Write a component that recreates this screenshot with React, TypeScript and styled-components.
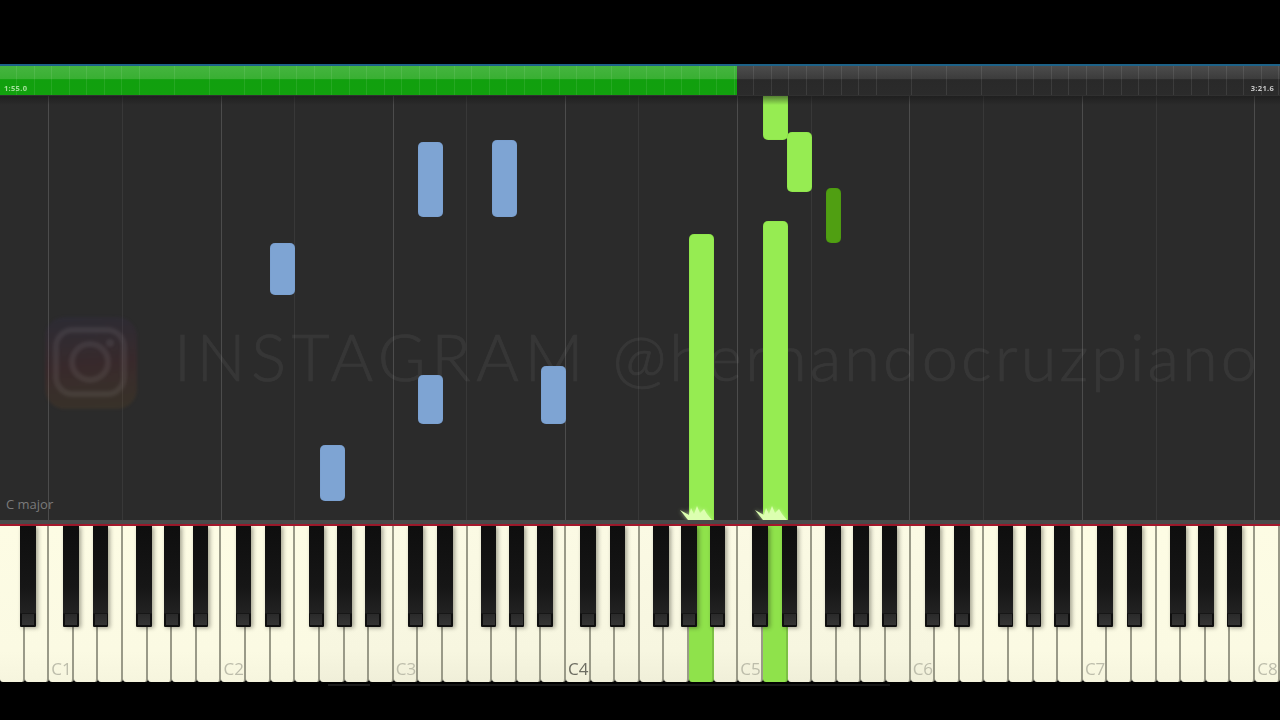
import React from "react";
import styled, { createGlobalStyle } from "styled-components";

const Global = createGlobalStyle`
  html, body { margin: 0; padding: 0; background: #000; overflow: hidden; }
  #root { width: 1280px; height: 720px; }
`;

const Page = styled.div`
  width: 1280px;
  height: 720px;
  display: flex;
  flex-direction: column;
  background: #000;
  font-family: "Open Sans", "Liberation Sans", sans-serif;
  overflow: hidden;
`;

const Letterbox = styled.div`
  height: 64px;
  flex: none;
  background: #000;
`;

const Timeline = styled.div`
  height: 32px;
  flex: none;
  display: flex;
  position: relative;
  border-top: 2px solid #1d6288;
  box-sizing: border-box;
  border-bottom: 1px solid #303030;
`;

const ticks = `repeating-linear-gradient(90deg, transparent 0, transparent 16.5px, rgba(255,255,255,0.085) 16.5px, rgba(255,255,255,0.085) 17.5px)`;

const Played = styled.div`
  width: 737px;
  flex: none;
  background: ${ticks}, linear-gradient(180deg, #45b53f 0%, #39af33 44%, #11a00e 47%, #12a00e 100%);
`;

const Remaining = styled.div`
  flex: 1;
  background: ${ticks}, linear-gradient(180deg, #4c4c4c 0%, #3c3c3c 44%, #292929 47%, #2b2b2b 100%);
`;

const TimeLabel = styled.span<{ $side: "left" | "right"; $color: string }>`
  position: absolute;
  bottom: 2px;
  ${(p) => (p.$side === "left" ? "left: 4px;" : "right: 6px;")}
  font-size: 7.5px;
  line-height: 9px;
  font-weight: 700;
  letter-spacing: 0.3px;
  color: ${(p) => p.$color};
  filter: blur(0.3px);
`;

const Roll = styled.div`
  height: 424px;
  flex: none;
  position: relative;
  background: #2b2b2b;
  overflow: hidden;
`;

const GridLine = styled.div<{ $major: boolean }>`
  position: absolute;
  top: 0;
  bottom: 0;
  width: 1px;
  background: ${(p) => (p.$major ? "#4c4c4c" : "#383838")};
`;

const Watermark = styled.div`
  position: absolute;
  left: 44px;
  top: 220px;
  display: flex;
  align-items: center;
`;

const LogoSvg = styled.svg`
  width: 94px;
  height: 94px;
  flex: none;
  filter: blur(1.5px);
`;

const WatermarkText = styled.span`
  margin-left: 36px;
  margin-top: -14px;
  font-family: Lato, "Open Sans", sans-serif;
  font-size: 65px;
  line-height: 80px;
  font-weight: 300;
  color: #fff;
  -webkit-text-stroke: 0.7px #fff;
  opacity: 0.05;
  white-space: nowrap;
  filter: blur(0.5px);
`;

const Brand = styled.span`
  letter-spacing: 5.65px;
`;

const Handle = styled.span`
  letter-spacing: 3px;
`;

const KeyName = styled.span`
  position: absolute;
  left: 6px;
  bottom: 8px;
  font-size: 13px;
  line-height: 16px;
  color: #7a7a7a;
  font-family: "Open Sans", sans-serif;
`;

const Note = styled.div<{ $tone: "blue" | "green" | "dark" }>`
  position: absolute;
  box-sizing: border-box;
  border-radius: 5px;
  background: ${(p) =>
    p.$tone === "blue" ? "#7ea4d3" : p.$tone === "green" ? "#96ec52" : "#509f12"};
  box-shadow: inset 0 0 1px
    ${(p) => (p.$tone === "blue" ? "#6a8fc0" : p.$tone === "green" ? "#6cbf30" : "#3c8008")};
`;

const TopShade = styled.div`
  position: absolute;
  left: 0;
  right: 0;
  top: 0;
  height: 9px;
  background: linear-gradient(180deg, rgba(20, 20, 20, 0.5), rgba(20, 20, 20, 0));
`;

const Spark = styled.svg`
  position: absolute;
  bottom: 0;
  width: 40px;
  height: 16px;
  filter: drop-shadow(0 0 2px rgba(220, 255, 180, 0.7));
`;

const Keyboard = styled.div`
  height: 162px;
  flex: none;
  position: relative;
  background: #000;
  border-top: 4px solid #4a4a4a;
  box-sizing: border-box;
`;

const RedLine = styled.div`
  height: 2px;
  background: #a5182c;
`;

const WhiteRow = styled.div`
  display: flex;
  height: 156px;
`;

const WhiteKey = styled.div<{ $pressed: boolean; $muted: boolean }>`
  flex: 1 1 0;
  position: relative;
  box-sizing: border-box;
  border-right: 2px solid ${(p) => (p.$pressed ? "#7cc044" : "#9a9a88")};
  border-bottom-left-radius: 3px;
  border-bottom-right-radius: 3px;
  background: ${(p) =>
    p.$pressed
      ? "#8fe24b"
      : p.$muted
      ? "linear-gradient(180deg, #fbfae4 0%, #f7f6e0 80%, #f0efd9 100%)"
      : "linear-gradient(180deg, #fdfce4 0%, #fbfae3 80%, #f6f5de 100%)"};
  display: flex;
  align-items: flex-end;
  justify-content: center;
`;

const Octave = styled.span<{ $strong: boolean }>`
  font-size: 17px;
  line-height: 24px;
  margin-bottom: 1px;
  margin-left: 2px;
  font-family: "Open Sans", sans-serif;
  color: ${(p) => (p.$strong ? "#6d6d62" : "#bdbdab")};
  filter: blur(0.3px);
`;

const BlackKey = styled.div`
  position: absolute;
  top: 2px;
  width: 15.5px;
  height: 101px;
  box-sizing: border-box;
  border-radius: 0 0 1px 1px;
  background: linear-gradient(180deg, #0e0e0e 0%, #161616 60%, #222 86%, #0f0f0f 87%);
  box-shadow: 2px 1px 4px rgba(30, 30, 20, 0.4);
  display: flex;
  align-items: flex-end;
  justify-content: center;
`;

const BlackCap = styled.div`
  width: 12px;
  height: 11px;
  margin-bottom: 2px;
  background: linear-gradient(180deg, #2a2a2a, #343434);
`;

const Footer = styled.div`
  flex: 1;
  display: flex;
  align-items: flex-start;
  padding-top: 2px;
  padding-left: 328px;
`;

const FooterMark = styled.div`
  width: 42px;
  height: 2px;
  background: #1a1a1a;
  margin-right: 22px;
`;

const FooterLine = styled.div`
  width: 498px;
  height: 2px;
  background: #151515;
`;

const whiteKeys = Array.from({ length: 52 }, (_, i) => i);
const octaveOf = (i: number) => (i - 2) / 7;
const blackCenters = [
  28,
  ...Array.from({ length: 7 }, (_, k) =>
    [71, 100.5, 144, 172, 200.5].map((c) => c + k * 172.3)
  ).flat(),
];
const gridMajor = [48, 221, 393, 565, 737, 909, 1082, 1254];
const gridMinor = [122, 294, 466, 638, 811, 983, 1156];

type Tone = "blue" | "green" | "dark";
const notes: { x: number; w: number; y1: number; y2: number; tone: Tone }[] = [
  { x: 418, w: 25, y1: 142, y2: 217, tone: "blue" },
  { x: 492, w: 25, y1: 140, y2: 217, tone: "blue" },
  { x: 270, w: 25, y1: 243, y2: 295, tone: "blue" },
  { x: 418, w: 25, y1: 375, y2: 424, tone: "blue" },
  { x: 541, w: 25, y1: 366, y2: 424, tone: "blue" },
  { x: 320, w: 25, y1: 445, y2: 501, tone: "blue" },
  { x: 763, w: 25, y1: 90, y2: 140, tone: "green" },
  { x: 787, w: 25, y1: 132, y2: 192, tone: "green" },
  { x: 826, w: 15, y1: 188, y2: 243, tone: "dark" },
  { x: 689, w: 25, y1: 234, y2: 526, tone: "green" },
  { x: 763, w: 25, y1: 221, y2: 526, tone: "green" },
];

const SparkShape = () => (
  <polygon
    points="0,6 9,11 11,4 14,10 17,2 20,9 24,5 27,10 32,16 8,16"
    fill="#dcffb0"
  />
);

export default function App() {
  return (
    <Page>
      <Global />
      <Letterbox />
      <Timeline>
        <Played />
        <Remaining />
        <TimeLabel $side="left" $color="#a4e09c">1:55.0</TimeLabel>
        <TimeLabel $side="right" $color="#c8c8c8">3:21.6</TimeLabel>
      </Timeline>
      <Roll>
        {gridMinor.map((x) => (
          <GridLine key={x} $major={false} style={{ left: x }} />
        ))}
        {gridMajor.map((x) => (
          <GridLine key={x} $major style={{ left: x }} />
        ))}
        <Watermark>
          <LogoSvg viewBox="0 0 94 94">
            <defs>
              <linearGradient id="ig" x1="0.2" y1="0" x2="0.3" y2="1">
                <stop offset="0" stopColor="#3a2f6a" stopOpacity="0.14" />
                <stop offset="0.55" stopColor="#7a2430" stopOpacity="0.17" />
                <stop offset="1" stopColor="#8a5a20" stopOpacity="0.14" />
              </linearGradient>
            </defs>
            <rect x="1" y="1" width="92" height="92" rx="20" fill="url(#ig)" />
            <rect x="12" y="14" width="68" height="64" rx="17" fill="none" stroke="rgba(255,255,255,0.07)" strokeWidth="6" />
            <circle cx="46" cy="46" r="18" fill="none" stroke="rgba(255,255,255,0.07)" strokeWidth="6" />
            <circle cx="66" cy="27" r="4" fill="rgba(255,255,255,0.07)" />
          </LogoSvg>
          <WatermarkText>
            <Brand>INSTAGRAM </Brand>
            <Handle>@hernandocruzpiano</Handle>
          </WatermarkText>
        </Watermark>
        {notes.map((n) => (
          <Note
            key={`${n.x}-${n.y1}`}
            $tone={n.tone}
            style={{ left: n.x, top: n.y1 - 96, width: n.w, height: n.y2 - n.y1 }}
          />
        ))}
        <TopShade />
        <Spark viewBox="0 0 40 16" style={{ left: 680 }}>
          <SparkShape />
        </Spark>
        <Spark viewBox="0 0 40 16" style={{ left: 755 }}>
          <SparkShape />
        </Spark>
        <KeyName>C major</KeyName>
      </Roll>
      <Keyboard>
        <RedLine />
        <WhiteRow>
          {whiteKeys.map((i) => {
            const isC = (i - 2) % 7 === 0;
            return (
              <WhiteKey key={i} $pressed={i === 28 || i === 31} $muted={i > 12 && i < 38}>
                {isC && <Octave $strong={i === 23}>C{octaveOf(i) + 1}</Octave>}
              </WhiteKey>
            );
          })}
        </WhiteRow>
        {blackCenters.map((c) => (
          <BlackKey key={c} style={{ left: c - 7.75 }}>
            <BlackCap />
          </BlackKey>
        ))}
      </Keyboard>
      <Footer>
        <FooterMark />
        <FooterLine />
      </Footer>
    </Page>
  );
}
